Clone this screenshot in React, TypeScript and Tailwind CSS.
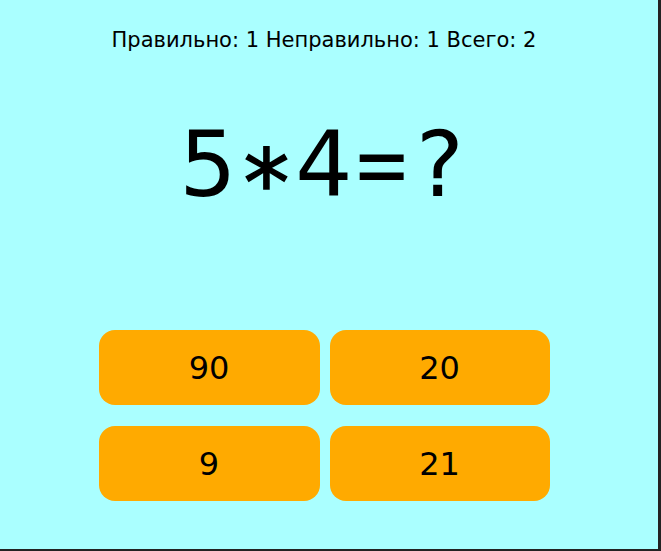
import React from "react";

const answers = ["90", "20", "9", "21"];

export default function App() {
  return (
    <div
      className="w-[661px] h-[551px] bg-[#222222] overflow-hidden"
      style={{ fontFamily: '"DejaVu Sans", sans-serif' }}
    >
      <div className="w-[658px] h-[549px] bg-[#aaffff] text-black">
        <div className="w-[648px] flex flex-col items-center pt-[30px]">
          <div className="text-[21px] leading-none whitespace-nowrap">
            Правильно: 1 Неправильно: 1 Всего: 2
          </div>
          <div className="mt-[69px] flex text-[90px] leading-none whitespace-nowrap">
            <span className="flex w-[58px] justify-center">5</span>
            <span className="flex w-[58px] justify-center">
              <span className="inline-block translate-y-[19px] scale-[1.02] [-webkit-text-stroke:1.5px_black]">*</span>
            </span>
            <span className="flex w-[58px] justify-center">4</span>
            <span className="flex w-[58px] justify-center">
              <span className="inline-block scale-x-[0.78]">=</span>
            </span>
            <span className="flex w-[58px] justify-center">?</span>
          </div>
          <div className="mt-[120px] grid grid-cols-[221px_220px] gap-x-[10px] gap-y-[21px]">
            {answers.map((a) => (
              <button
                key={a}
                className="h-[75px] rounded-[16px] bg-[#ffaa00] text-[32px] leading-none flex items-center justify-center"
              >
                {a}
              </button>
            ))}
          </div>
        </div>
      </div>
    </div>
  );
}
